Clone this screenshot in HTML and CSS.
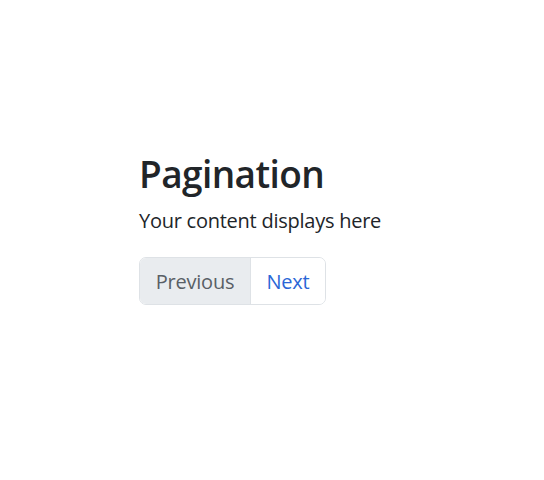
FILE: index.html
```html
<!DOCTYPE html>
<html>
<head>
<meta charset="utf-8">
<link rel="stylesheet" href="styles.css">
</head>
<body>
<main class="page">
  <h1 class="title">Pagination</h1>
  <p class="text">Your content displays here</p>
  <nav class="pager">
    <button class="pager-btn pager-prev">Previous</button>
    <button class="pager-btn pager-next">Next</button>
  </nav>
</main>
</body>
</html>
```
FILE: styles.css
```css
html, body {
  margin: 0;
  background: #ffffff;
}
.page {
  padding: 152px 0 0 139px;
  font-family: "Open Sans", "Noto Sans", sans-serif;
  color: #212529;
}
.title {
  margin: 0;
  font-size: 37px;
  font-weight: 600;
  line-height: 1.2;
  letter-spacing: -0.6px;
}
.text {
  margin: 10px 0 0 0;
  font-size: 20px;
  line-height: 1.5;
  letter-spacing: -0.25px;
}
.pager {
  display: inline-flex;
  margin-top: 21px;
  border: 1px solid #dee2e6;
  border-radius: 7px;
  overflow: hidden;
}
.pager-btn {
  font-family: inherit;
  font-size: 20px;
  line-height: 1.5;
  border: 0;
  margin: 0;
  padding: 9px 0 7px;
  height: 46px;
  letter-spacing: -0.2px;
}
.pager-prev {
  background: #e9ecef;
  color: #595f66;
  border-right: 1px solid #dee2e6;
  width: 111px;
}
.pager-next {
  background: #ffffff;
  color: #2a66d6;
  width: 74px;
}
```
